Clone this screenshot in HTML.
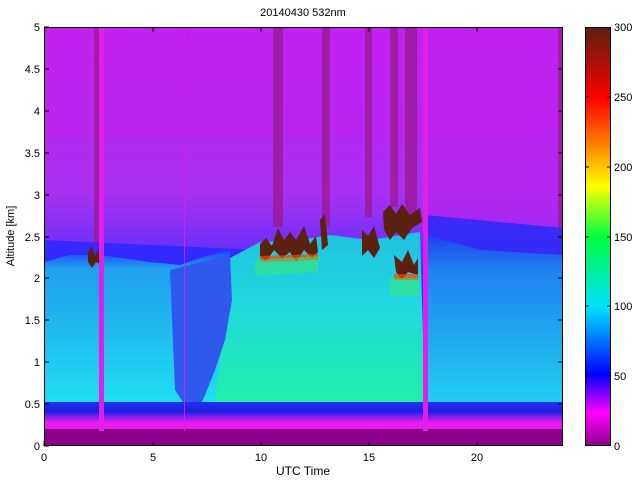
<!DOCTYPE html>
<html><head><meta charset="utf-8"><style>
body{margin:0;background:#fff;width:640px;height:480px;overflow:hidden}
svg{display:block;font-family:"Liberation Sans",sans-serif}
</style></head><body>
<svg width="640" height="480" viewBox="0 0 640 480">
<defs>
<linearGradient id="cb" x1="0" y1="1" x2="0" y2="0">
<stop offset="0" stop-color="#8c008c"/>
<stop offset="0.08" stop-color="#ff00ff"/>
<stop offset="0.17" stop-color="#0000ff"/>
<stop offset="0.33" stop-color="#00e0ff"/>
<stop offset="0.5" stop-color="#00ff40"/>
<stop offset="0.62" stop-color="#ffff00"/>
<stop offset="0.72" stop-color="#ff8000"/>
<stop offset="0.83" stop-color="#ff0000"/>
<stop offset="1" stop-color="#5a2010"/>
</linearGradient>
<linearGradient id="bg" x1="0" y1="0" x2="0" y2="1">
<stop offset="0" stop-color="#c020f0"/>
<stop offset="0.4" stop-color="#a830f0"/>
<stop offset="0.52" stop-color="#7030f8"/>
<stop offset="0.62" stop-color="#3030ff"/>
<stop offset="1" stop-color="#3030ff"/>
</linearGradient>
<linearGradient id="aerL" x1="0" y1="0" x2="0" y2="1">
<stop offset="0" stop-color="#2040f8"/>
<stop offset="0.12" stop-color="#20a0f0"/>
<stop offset="0.5" stop-color="#20b8f0"/>
<stop offset="1" stop-color="#20e0f0"/>
</linearGradient>
<linearGradient id="aerM" x1="0" y1="0" x2="0" y2="1">
<stop offset="0" stop-color="#20c0e0"/>
<stop offset="0.4" stop-color="#20d8e0"/>
<stop offset="1" stop-color="#20f0a8"/>
</linearGradient>
<linearGradient id="aerR" x1="0" y1="0" x2="0" y2="1">
<stop offset="0" stop-color="#2040f0"/>
<stop offset="0.2" stop-color="#2080f0"/>
<stop offset="1" stop-color="#20d0f0"/>
</linearGradient>
<linearGradient id="bot" x1="0" y1="0" x2="0" y2="1">
<stop offset="0" stop-color="#2030f0"/>
<stop offset="0.35" stop-color="#2020e0"/>
<stop offset="0.6" stop-color="#a020f0"/>
<stop offset="0.75" stop-color="#f018f0"/>
<stop offset="1" stop-color="#e020e0"/>
</linearGradient>
</defs>
<text x="303" y="16" font-size="11" text-anchor="middle">20140430 532nm</text>
<rect x="44" y="27" width="519" height="419" fill="url(#bg)"/>
<rect x="44" y="27" width="519" height="110" fill="#c422ee" opacity="0.5"/>
<rect x="425" y="27" width="138" height="200" fill="#c020f0" opacity="0.55"/>
<g fill="#9a1a9a" opacity="0.8">
<rect x="94" y="27" width="7" height="220"/>
<rect x="273" y="27" width="10" height="200"/>
<rect x="322" y="27" width="8" height="200"/>
<rect x="365" y="27" width="7" height="190"/>
<rect x="390" y="27" width="8" height="180"/>
<rect x="405" y="27" width="12" height="190"/>
<rect x="558" y="27" width="5" height="390"/>
</g>
<path d="M44 240 L260 250 L260 270 L44 270Z" fill="#2828ff" opacity="0.8"/>
<path d="M425 215 L500 222 L563 228 L563 280 L425 280Z" fill="#2a2af8" opacity="0.85"/>
<path d="M44 262 L70 255 L100 255 L150 262 L180 265 L200 258 L230 250 L230 405 L44 405Z" fill="url(#aerL)"/>
<path d="M230 258 L260 242 L300 240 L330 235 L370 240 L420 232 L425 405 L215 405 Z" fill="url(#aerM)"/>
<path d="M170 270 L230 255 L232 300 L225 340 L215 370 L205 395 L198 410 L185 405 L175 390 Z" fill="#3058ec"/>
<path d="M425 235 L480 250 L563 255 L563 405 L425 405Z" fill="url(#aerR)"/>
<!-- clouds: jagged -->
<g fill="#5a2010">
<path d="M88 252 L92 246 L95 256 L99 248 L103 252 L102 265 L96 262 L92 268 L88 262Z"/>
<path d="M260 244 L266 238 L272 246 L278 228 L284 240 L290 232 L296 240 L304 226 L310 244 L316 236 L318 252 L312 258 L304 250 L296 262 L290 252 L282 258 L274 250 L266 262 L260 256Z"/>
<path d="M320 220 L325 214 L328 245 L322 250 Z"/>
<path d="M362 230 L368 236 L374 226 L380 248 L374 258 L368 250 L362 256 Z"/>
<path d="M383 212 L390 205 L396 214 L402 204 L410 215 L420 208 L422 222 L412 228 L404 240 L396 232 L390 240 L384 230Z"/>
<path d="M394 255 L402 262 L408 250 L414 265 L418 258 L418 275 L408 272 L402 280 L396 272Z"/>
</g>
<g fill="#ff4000" opacity="0.7">
<path d="M260 256 L318 254 L318 260 L260 262Z"/>
<path d="M394 274 L418 274 L418 280 L394 280Z"/>
</g>
<path d="M255 260 L320 256 L318 272 L255 276Z" fill="#40f060" opacity="0.45"/>
<path d="M390 278 L420 278 L420 296 L390 296Z" fill="#40f060" opacity="0.45"/>
<rect x="44" y="402" width="519" height="28" fill="url(#bot)"/>
<rect x="44" y="429" width="519" height="17" fill="#8c008c"/>
<rect x="99" y="27" width="5" height="404" fill="#e020e8"/>
<rect x="423" y="27" width="5" height="404" fill="#e020e8"/>
<rect x="184" y="27" width="1" height="404" fill="#d020e8"/>
<rect x="44.5" y="27.5" width="518" height="418" fill="none" stroke="#000"/>
<g stroke="#000">
<path d="M44 446v-5M153 446v-5M261 446v-5M369 446v-5M477 446v-5M153 27v5M261 27v5M369 27v5M477 27v5"/>
<path d="M44 446h5M44 404h5M44 362h5M44 320h5M44 278h5M44 237h5M44 195h5M44 153h5M44 111h5M44 69h5M44 27h5"/>
<path d="M563 404h-5M563 362h-5M563 320h-5M563 278h-5M563 237h-5M563 195h-5M563 153h-5M563 111h-5M563 69h-5"/>
</g>
<g font-size="11" text-anchor="middle">
<text x="44" y="461">0</text><text x="153" y="461">5</text><text x="261" y="461">10</text><text x="369" y="461">15</text><text x="477" y="461">20</text>
<text x="303" y="475" font-size="12">UTC Time</text>
</g>
<g font-size="11" text-anchor="end">
<text x="40" y="450">0</text><text x="40" y="408">0.5</text><text x="40" y="366">1</text><text x="40" y="324">1.5</text><text x="40" y="282">2</text><text x="40" y="241">2.5</text><text x="40" y="199">3</text><text x="40" y="157">3.5</text><text x="40" y="115">4</text><text x="40" y="73">4.5</text><text x="40" y="31">5</text>
</g>
<text transform="translate(14 236) rotate(-90)" font-size="11" text-anchor="middle">Altitude [km]</text>
<rect x="585" y="27" width="26" height="419" fill="url(#cb)"/>
<rect x="585.5" y="27.5" width="25" height="418" fill="none" stroke="#000"/>
<g stroke="#000">
<path d="M585 376h4M585 306h4M585 237h4M585 167h4M585 97h4M611 376h-4M611 306h-4M611 237h-4M611 167h-4M611 97h-4"/>
</g>
<g font-size="11">
<text x="614" y="450">0</text><text x="614" y="380">50</text><text x="614" y="310">100</text><text x="614" y="241">150</text><text x="614" y="171">200</text><text x="614" y="101">250</text><text x="614" y="31">300</text>
</g>
</svg>
</body></html>
